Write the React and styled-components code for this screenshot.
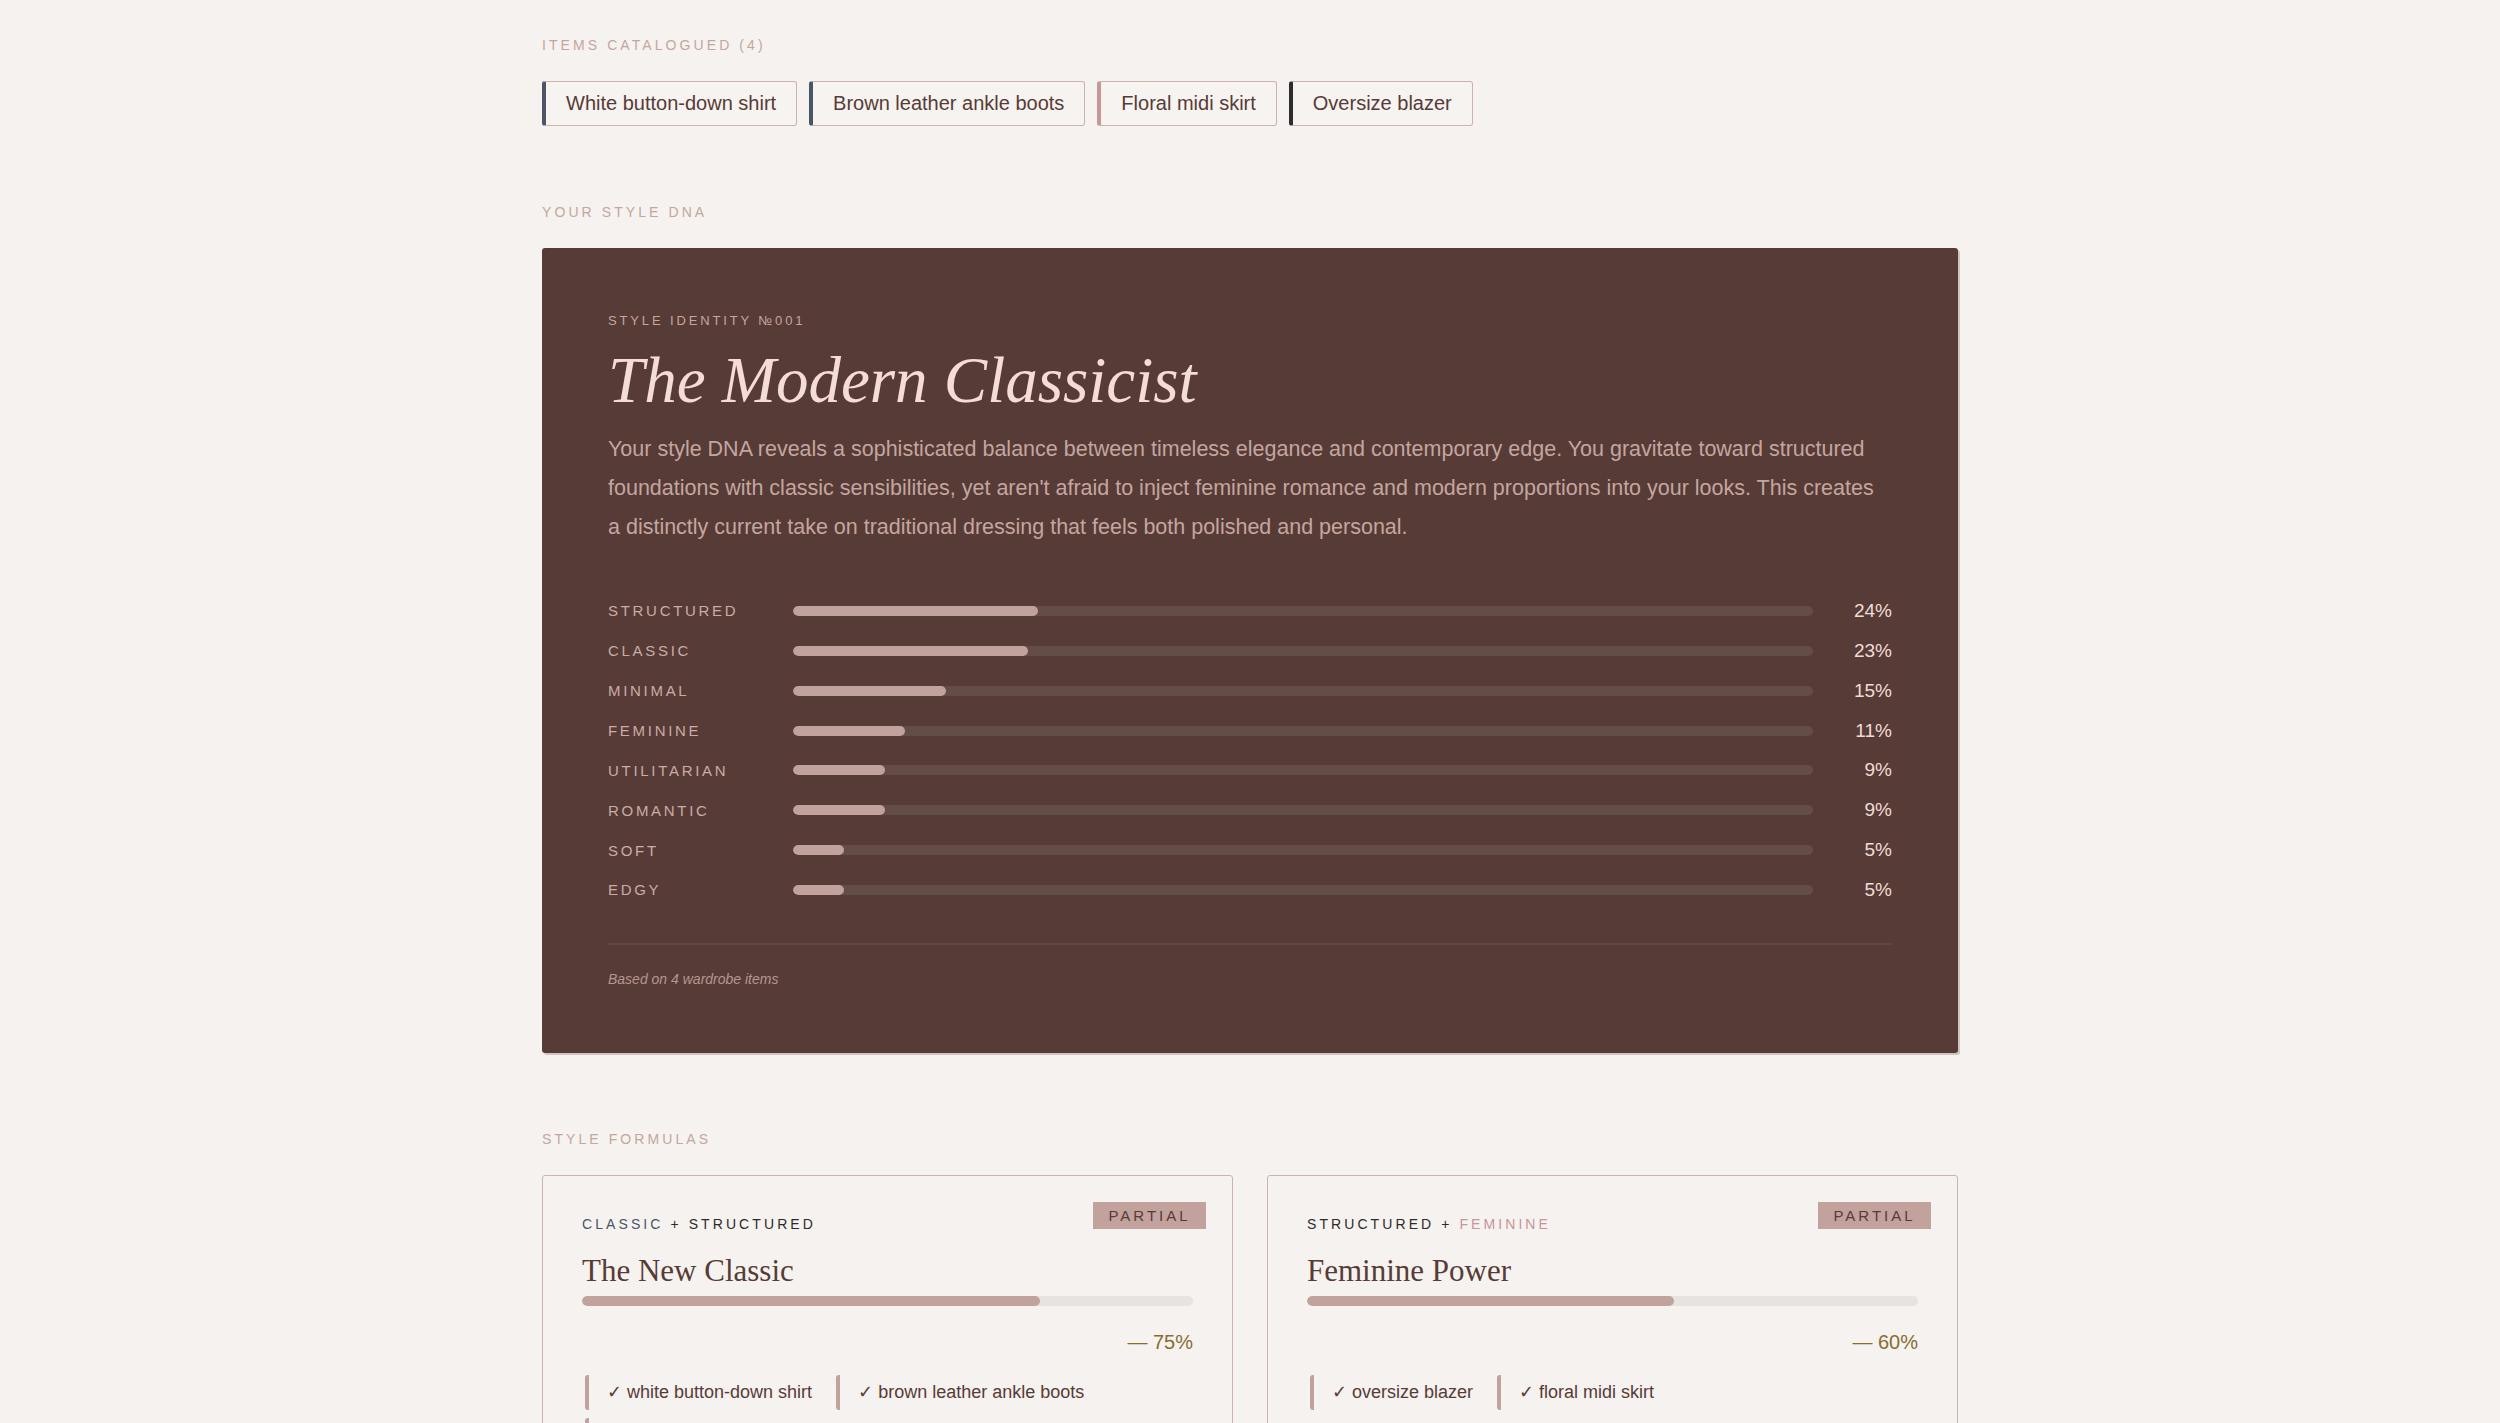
import React from "react";
import styled, { createGlobalStyle } from "styled-components";

const GlobalStyle = createGlobalStyle`
  html, body {
    margin: 0;
    padding: 0;
    background: #f6f2ef;
  }
  body {
    font-family: "Liberation Sans", Arial, sans-serif;
    color: #573b36;
  }
`;

const Page = styled.div`
  width: 1416px;
  margin: 0 auto;
  padding: 37px 0 80px;
  display: flex;
  flex-direction: column;
  gap: 78px;
`;

const Section = styled.section`
  display: flex;
  flex-direction: column;
`;

const SectionLabel = styled.h2`
  margin: 0 0 28px;
  font-size: 14px;
  font-weight: 400;
  line-height: 16px;
  letter-spacing: 0.22em;
  text-transform: uppercase;
  color: #c4a6a0;
`;

const ChipRow = styled.div`
  display: flex;
  flex-wrap: wrap;
  gap: 12px;
`;

const Chip = styled.div`
  height: 45px;
  box-sizing: border-box;
  display: flex;
  align-items: center;
  padding: 0 20px;
  border: 1px solid #cbb4ae;
  border-left: 4px solid ${(p) => p.$accent};
  border-radius: 3px;
  font-size: 20px;
  color: #573b36;
  background: #f7f3f0;
`;

const DnaCard = styled.div`
  background: #573b36;
  border-radius: 3px;
  padding: 65px 66px 66px;
  box-shadow: 2px 2px 0 rgba(87, 59, 54, 0.25);
`;

const Eyebrow = styled.div`
  font-size: 13px;
  letter-spacing: 0.22em;
  color: #c4a6a0;
  line-height: 16px;
`;

const IdentityTitle = styled.h1`
  margin: 11px 0 10px;
  font-family: "Liberation Serif", "Times New Roman", serif;
  font-style: italic;
  font-weight: 400;
  font-size: 65px;
  line-height: 80px;
  color: #f3ddd6;
`;

const Summary = styled.p`
  margin: 0 0 44px;
  max-width: 1275px;
  font-size: 21.5px;
  line-height: 39px;
  color: #c4a6a0;
`;

const Bars = styled.div`
  display: grid;
  grid-template-columns: 185px 1fr 79px;
  grid-auto-rows: 39.86px;
  align-items: center;
`;

const BarLabel = styled.div`
  font-size: 15px;
  letter-spacing: 0.18em;
  color: #c9aca6;
`;

const Track = styled.div`
  height: 10px;
  border-radius: 5px;
  background: #644d48;
  overflow: hidden;
`;

const Fill = styled.div`
  height: 100%;
  border-radius: 5px;
  background: #c2a29c;
`;

const Pct = styled.div`
  text-align: right;
  font-size: 19px;
  color: #f0dcd6;
`;

const Divider = styled.hr`
  margin: 33px 0 26px;
  border: 0;
  height: 2px;
  background: #614741;
`;

const Footnote = styled.div`
  font-size: 14px;
  font-style: italic;
  color: #b39792;
`;

const FormulaGrid = styled.div`
  display: grid;
  grid-template-columns: 1fr 1fr;
  gap: 34px;
`;

const FormulaCard = styled.div`
  position: relative;
  border: 1px solid #cbb4ae;
  border-radius: 3px;
  padding: 40px 39px 40px;
  background: #f6f2ef;
`;

const Badge = styled.div`
  position: absolute;
  top: 26px;
  right: 26px;
  width: 113px;
  height: 27px;
  display: flex;
  align-items: center;
  justify-content: center;
  background: #c2a29c;
  color: #573b36;
  font-size: 15px;
  letter-spacing: 0.2em;
`;

const Combo = styled.div`
  font-size: 14px;
  line-height: 16px;
  letter-spacing: 0.22em;
  color: #2e2a2a;
`;

const Tone = styled.span`
  color: ${(p) => p.$color};
`;

const FormulaTitle = styled.h3`
  margin: 20px 0 6px;
  font-family: "Liberation Serif", "Times New Roman", serif;
  font-weight: 400;
  font-size: 31px;
  line-height: 38px;
  color: #573b36;
`;

const Progress = styled(Track)`
  background: #e9e3e0;
`;

const Match = styled.div`
  margin: 24px 0 21px;
  text-align: right;
  font-size: 20px;
  line-height: 24px;
  color: #8a6d2f;
`;

const TagRow = styled.div`
  display: flex;
  flex-wrap: wrap;
  gap: 8px 12px;
  margin-left: 3px;
`;

const Tag = styled.div`
  height: 35px;
  box-sizing: border-box;
  display: flex;
  align-items: center;
  padding: 0 12px 0 18px;
  border-left: 4px solid #c2a29c;
  border-radius: 3px;
  font-size: 18px;
  color: #573b36;
`;

const items = [
  { name: "White button-down shirt", accent: "#4a5568" },
  { name: "Brown leather ankle boots", accent: "#4a5568" },
  { name: "Floral midi skirt", accent: "#c8959a" },
  { name: "Oversize blazer", accent: "#2d2d2d" },
];

const traits = [
  ["STRUCTURED", 24],
  ["CLASSIC", 23],
  ["MINIMAL", 15],
  ["FEMININE", 11],
  ["UTILITARIAN", 9],
  ["ROMANTIC", 9],
  ["SOFT", 5],
  ["EDGY", 5],
];

const formulas = [
  {
    a: ["CLASSIC", "#4a5568"],
    b: ["STRUCTURED", "#2e2a2a"],
    title: "The New Classic",
    pct: 75,
    pieces: ["white button-down shirt", "brown leather ankle boots", "oversize blazer"],
  },
  {
    a: ["STRUCTURED", "#2e2a2a"],
    b: ["FEMININE", "#c8959a"],
    title: "Feminine Power",
    pct: 60,
    pieces: ["oversize blazer", "floral midi skirt"],
  },
];

export default function App() {
  return (
    <>
      <GlobalStyle />
      <Page>
        <Section>
          <SectionLabel>Items Catalogued ({items.length})</SectionLabel>
          <ChipRow>
            {items.map((it) => (
              <Chip key={it.name} $accent={it.accent}>
                {it.name}
              </Chip>
            ))}
          </ChipRow>
        </Section>

        <Section>
          <SectionLabel>Your Style DNA</SectionLabel>
          <DnaCard>
            <Eyebrow>STYLE IDENTITY №001</Eyebrow>
            <IdentityTitle>The Modern Classicist</IdentityTitle>
            <Summary>
              Your style DNA reveals a sophisticated balance between timeless elegance and
              contemporary edge. You gravitate toward structured foundations with classic
              sensibilities, yet aren't afraid to inject feminine romance and modern proportions
              into your looks. This creates a distinctly current take on traditional dressing
              that feels both polished and personal.
            </Summary>
            <Bars>
              {traits.map(([label, value]) => (
                <React.Fragment key={label}>
                  <BarLabel>{label}</BarLabel>
                  <Track>
                    <Fill style={{ width: `${value}%` }} />
                  </Track>
                  <Pct>{value}%</Pct>
                </React.Fragment>
              ))}
            </Bars>
            <Divider />
            <Footnote>Based on {items.length} wardrobe items</Footnote>
          </DnaCard>
        </Section>

        <Section>
          <SectionLabel>Style Formulas</SectionLabel>
          <FormulaGrid>
            {formulas.map((f) => (
              <FormulaCard key={f.title}>
                <Badge>PARTIAL</Badge>
                <Combo>
                  <Tone $color={f.a[1]}>{f.a[0]}</Tone> + <Tone $color={f.b[1]}>{f.b[0]}</Tone>
                </Combo>
                <FormulaTitle>{f.title}</FormulaTitle>
                <Progress>
                  <Fill style={{ width: `${f.pct}%` }} />
                </Progress>
                <Match>— {f.pct}%</Match>
                <TagRow>
                  {f.pieces.map((p) => (
                    <Tag key={p}>✓ {p}</Tag>
                  ))}
                </TagRow>
              </FormulaCard>
            ))}
          </FormulaGrid>
        </Section>
      </Page>
    </>
  );
}
